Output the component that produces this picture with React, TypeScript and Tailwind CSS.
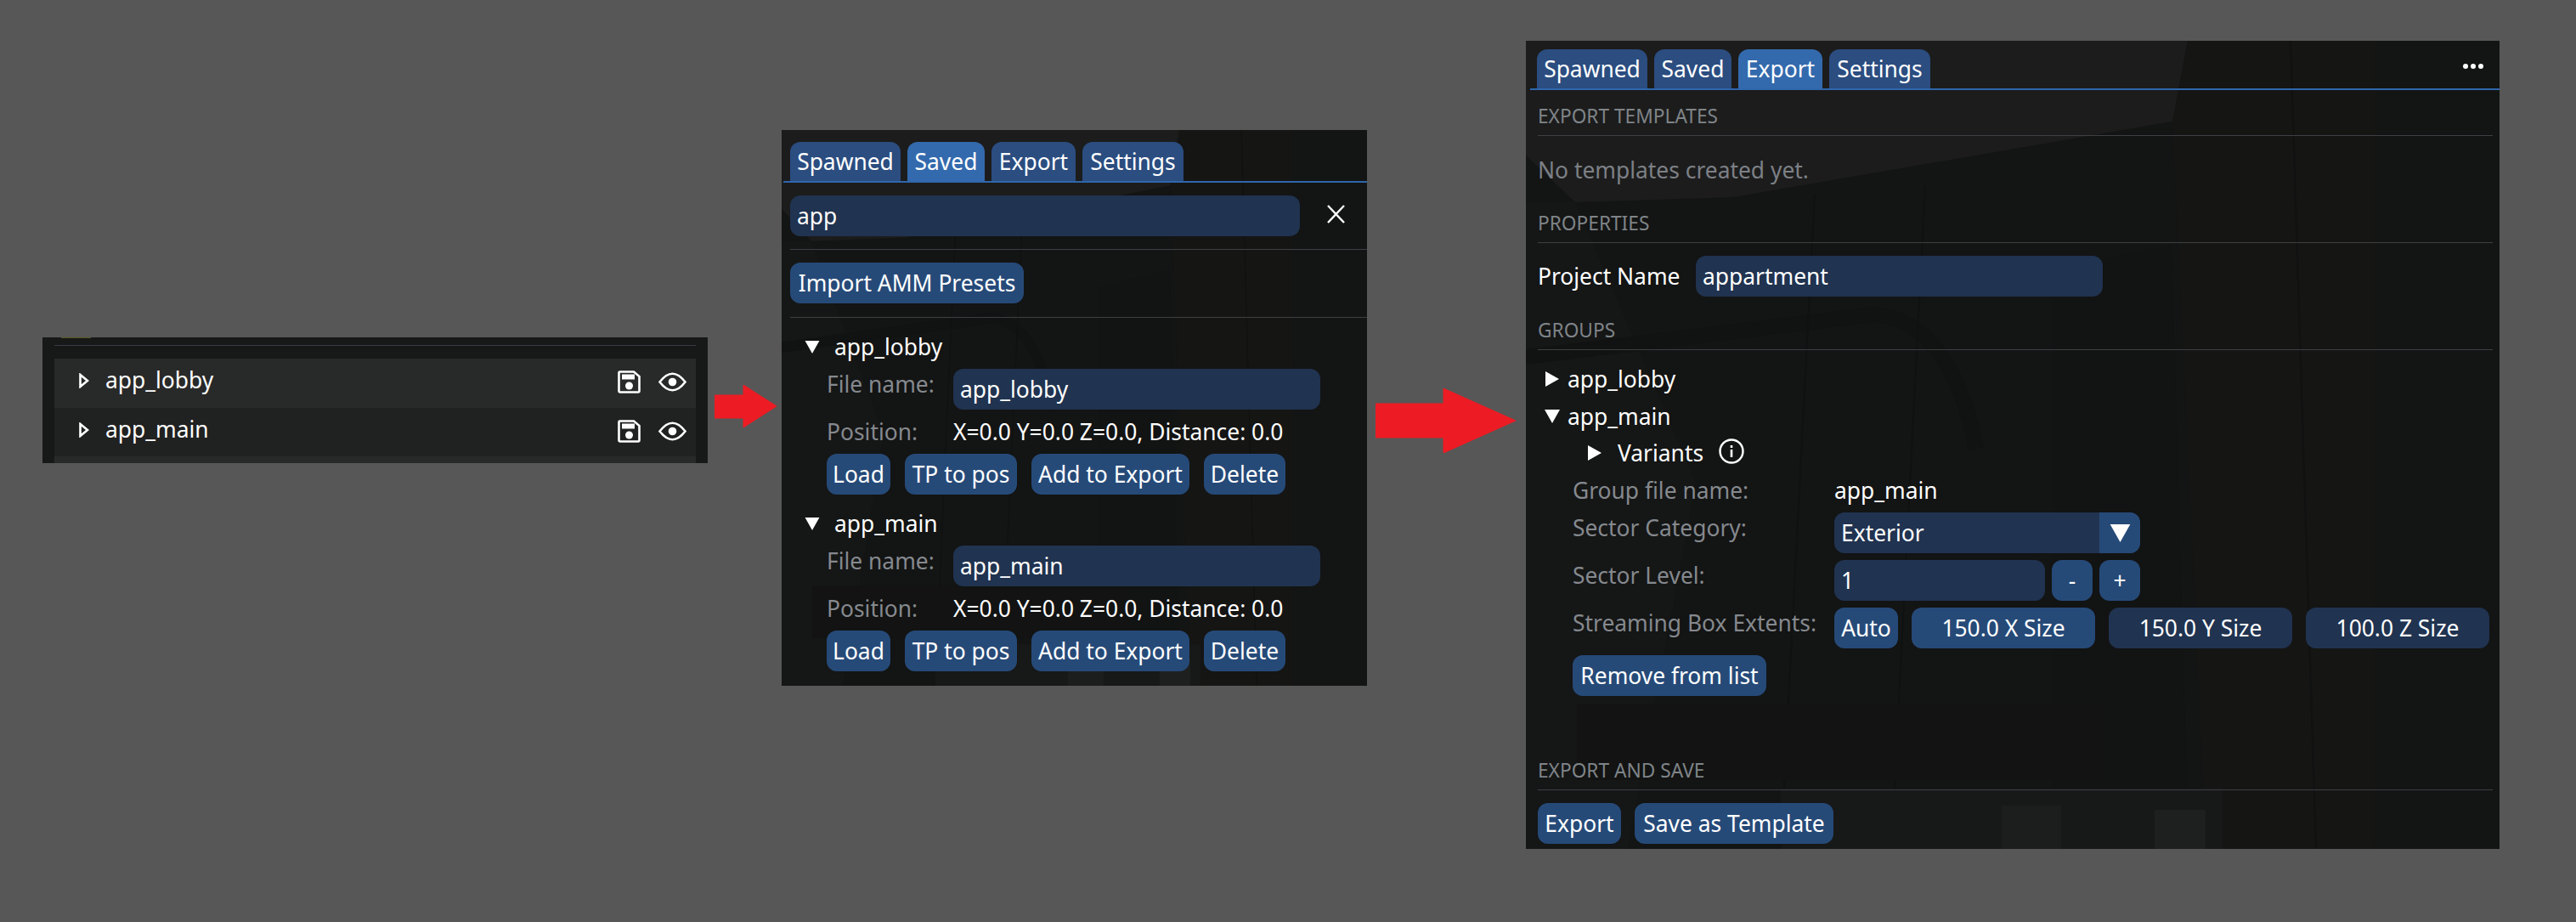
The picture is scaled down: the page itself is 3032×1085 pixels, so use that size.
const BTN = 'flex h-12 items-center justify-center whitespace-nowrap rounded-[12px] bg-[#264a78] text-white'
const INPUT = 'flex h-12 items-center rounded-[12px] bg-[#203350] px-2 text-white'
const MUTED = 'text-[#85898e]'

const TABS = [
  { name: 'Spawned', width: 'w-[130px]' },
  { name: 'Saved', width: 'w-[91px]' },
  { name: 'Export', width: 'w-[99px]' },
  { name: 'Settings', width: 'w-[119px]' },
]

function Backdrop() {
  return (
    <svg className="pointer-events-none absolute inset-0 h-full w-full" viewBox="0 0 1146 951" preserveAspectRatio="none">
      <polygon points="0,0 779,0 761,95 244,184 58,190 0,135" fill="#1c1c1c" />
      <polygon points="761,95 779,0 1000,0 1000,951 800,951 780,500" fill="#151514" />
      <polygon points="0,190 58,190 200,520 120,951 0,951" fill="#151616" />
      <polygon points="620,270 760,240 780,951 620,951" fill="#121313" />
      <path d="M0 372 L410 322 Q500 330 530 480" fill="none" stroke="#111212" strokeWidth="18" />
      <path d="M340 180 L300 951 M470 170 L430 951 M900 0 L930 951" stroke="#101111" strokeWidth="2" fill="none" />
      <rect x="60" y="780" width="620" height="90" fill="#121312" />
      <rect x="300" y="880" width="520" height="71" fill="#171818" />
      <rect x="560" y="900" width="70" height="51" fill="#1c1e1e" />
      <rect x="740" y="905" width="60" height="46" fill="#1e2020" />
    </svg>
  )
}

function TabBar({ active }: { active: string }) {
  return (
    <div className="flex h-[48px] gap-2 border-b-2 border-[#2f66ad] pl-2">
      {TABS.map((t) => (
        <div
          key={t.name}
          className={`flex h-[46px] items-center justify-center rounded-t-[12px] text-white ${t.width} ${t.name === active ? 'bg-[#336aad]' : 'bg-[#2b4d80]'}`}
        >
          {t.name}
        </div>
      ))}
    </div>
  )
}

function Heading({ children, className }: { children: string; className: string }) {
  return (
    <div className={`flex h-[42px] items-center border-b border-[#3e3f44] pb-[3px] text-[22.7px] text-[#7f8488] ${className}`}>
      {children}
    </div>
  )
}

function TriDown({ className }: { className: string }) {
  return (
    <svg className={className} viewBox="0 0 18 16">
      <polygon points="0,0 18,0 9,16" fill="#fff" />
    </svg>
  )
}

function TriRight({ className }: { className: string }) {
  return (
    <svg className={className} viewBox="0 0 16 18">
      <polygon points="0,0 16,9 0,18" fill="#fff" />
    </svg>
  )
}

function ListRow({ name, bg }: { name: string; bg: string }) {
  return (
    <div className={`flex items-center pb-[3px] pl-[29px] pr-[11px] text-white ${bg}`}>
      <svg className="mb-[3px] h-[18px] w-3" viewBox="0 0 12 18">
        <polygon points="1.5,2 10,9 1.5,16" fill="none" stroke="#fff" strokeWidth="2.6" />
      </svg>
      <span className="ml-[19px] flex-1 pb-[5px]">{name}</span>
      <svg className="h-[27px] w-[27px]" viewBox="0 0 27 27">
        <path d="M2.5 1.5 H19 L25.5 7 V24 Q25.5 25.5 24 25.5 H3 Q1.5 25.5 1.5 24 V3 Q1.5 1.5 2.5 1.5 Z" fill="none" stroke="#fff" strokeWidth="2.6" />
        <rect x="5" y="4.5" width="15" height="6" fill="#fff" />
        <circle cx="13.5" cy="18" r="4.5" fill="#fff" />
      </svg>
      <svg className="ml-[21px] h-[23px] w-[33px]" viewBox="0 0 33 23">
        <path d="M1.5 11.5 Q16.5 -8 31.5 11.5 Q16.5 31 1.5 11.5 Z" fill="none" stroke="#fff" strokeWidth="2.6" />
        <circle cx="16.5" cy="11.5" r="4.8" fill="#fff" />
      </svg>
    </div>
  )
}

function SavedEntry({ name, className }: { name: string; className: string }) {
  return (
    <div className={className}>
      <div className="flex h-8 items-center pb-1 pl-[27px] text-white">
        <TriDown className="h-[15px] w-[18px]" />
        <span className="ml-[17px]">{name}</span>
      </div>
      <div className="mt-2 flex pl-[53px]">
        <span className={`w-[149px] pt-[2px] leading-8 ${MUTED}`}>File name:</span>
        <div className={`${INPUT} w-[432px]`}>{name}</div>
      </div>
      <div className="mt-3 flex h-8 items-center pb-1 pl-[53px]">
        <span className={`w-[149px] ${MUTED}`}>Position:</span>
        <span className="text-white">X=0.0 Y=0.0 Z=0.0, Distance: 0.0</span>
      </div>
      <div className="mt-2 flex gap-[17px] pl-[53px]">
        <div className={`${BTN} w-[75px]`}>Load</div>
        <div className={`${BTN} w-[132px]`}>TP to pos</div>
        <div className={`${BTN} w-[186px]`}>Add to Export</div>
        <div className={`${BTN} w-[96px]`}>Delete</div>
      </div>
    </div>
  )
}

function FormRow({ label, children, className }: { label: string; children: React.ReactNode; className: string }) {
  return (
    <div className={`flex pl-[55px] ${className}`}>
      <span className={`w-[308px] shrink-0 pt-[2px] leading-8 ${MUTED}`}>{label}</span>
      {children}
    </div>
  )
}

export default function App() {
  return (
    <div className="flex h-[1085px] w-[3032px] items-start overflow-hidden bg-[#575757] pl-[50px] font-['Noto_Sans',sans-serif] text-[26.4px] leading-8">
      {/* hierarchy list crop */}
      <div className="relative mt-[397px] h-[148px] w-[783px] shrink-0 overflow-hidden bg-[#171818]">
        <div className="absolute left-[22px] top-0 h-px w-[35px] bg-[#5a5a20]" />
        <div className="relative mx-[14px] mt-[9px] border-t border-[#3a3a44]" />
        <div className="relative mx-[14px] mt-[15px] grid grid-rows-[58px_57px_8px]">
          <ListRow name="app_lobby" bg="bg-[#282929]" />
          <ListRow name="app_main" bg="bg-[#202121]" />
          <div className="bg-[#282929]" />
        </div>
      </div>

      <svg className="ml-[8px] mt-[453px] h-[50px] w-[73px] shrink-0" viewBox="0 0 73 50">
        <polygon points="0,12 34,12 34,0 73,25 34,50 34,39 0,39" fill="#ed1c24" stroke="#ed1c24" strokeLinejoin="round" />
      </svg>

      {/* saved tab */}
      <div className="relative ml-[6px] mt-[153px] h-[654px] w-[689px] shrink-0 overflow-hidden bg-[#131414]">
        <Backdrop />
        <div className="relative pt-[14px]">
          <div className="pl-[2px]">
            <TabBar active="Saved" />
          </div>
          <div className="mt-[15px] flex items-center pl-[10px]">
            <div className={`${INPUT} w-[600px]`}>app</div>
            <svg className="mb-[4px] ml-[31px] h-[22px] w-[23px]" viewBox="0 0 23 22">
              <path d="M2 1 L21 21 M21 1 L2 21" stroke="#fff" strokeWidth="2.4" />
            </svg>
          </div>
          <div className="ml-[10px] mt-[15px] border-t border-[#3e3f44]" />
          <div className="mt-[15px] pl-[10px]">
            <div className={`${BTN} w-[275px]`}>Import AMM Presets</div>
          </div>
          <div className="ml-[10px] mt-[16px] border-t border-[#3e3f44]" />
          <SavedEntry name="app_lobby" className="mt-5" />
          <SavedEntry name="app_main" className="mt-5" />
        </div>
      </div>

      <svg className="ml-[10px] mt-[457px] h-[76px] w-[165px] shrink-0" viewBox="0 0 165 76">
        <polygon points="0,18 80,18 80,0 165,38 80,76 80,58 0,58" fill="#ed1c24" stroke="#ed1c24" strokeLinejoin="round" />
      </svg>

      {/* export tab */}
      <div className="relative ml-[12px] mt-[48px] h-[951px] w-[1146px] shrink-0 overflow-hidden bg-[#131414]">
        <Backdrop />
        <div className="relative pt-[10px]">
          <div className="absolute right-[19px] top-[27px] flex gap-[3px]">
            <span className="h-[6px] w-[6px] rounded-full bg-white" />
            <span className="h-[6px] w-[6px] rounded-full bg-white" />
            <span className="h-[6px] w-[6px] rounded-full bg-white" />
          </div>
          <div className="pl-[5px]">
            <TabBar active="Export" />
          </div>
          <div className="pl-[14px] pr-2">
            <Heading className="mt-3">EXPORT TEMPLATES</Heading>
            <p className="mt-[24px] text-[#7c8086]">No templates created yet.</p>
            <Heading className="mt-[28px]">PROPERTIES</Heading>
            <div className="mt-[15px] flex items-center">
              <span className="w-[186px] text-white">Project Name</span>
              <div className={`${INPUT} w-[479px]`}>appartment</div>
            </div>
            <Heading className="mt-[21px]">GROUPS</Heading>
          </div>
          <div className="mt-5 flex h-8 items-center pb-1 pl-[23px] text-white">
            <TriRight className="h-[18px] w-4" />
            <span className="ml-[10px]">app_lobby</span>
          </div>
          <div className="mt-3 flex h-8 items-center pb-1 pl-[22px] text-white">
            <TriDown className="h-[16px] w-[18px]" />
            <span className="ml-[9px]">app_main</span>
          </div>
          <div className="mt-[11px] flex h-8 items-center pb-1 pl-[73px] text-white">
            <TriRight className="h-[18px] w-4" />
            <span className="ml-[19px]">Variants</span>
            <svg className="mb-[5px] ml-[18px] h-[30px] w-[30px]" viewBox="0 0 30 30">
              <circle cx="15" cy="15" r="13.5" fill="none" stroke="#fff" strokeWidth="2.4" />
              <rect x="13.7" y="13" width="2.6" height="9" fill="#fff" />
              <rect x="13.7" y="8" width="2.6" height="3" fill="#fff" />
            </svg>
          </div>
          <div className="mt-3 flex h-8 items-center pb-1 pl-[55px]">
            <span className={`w-[308px] ${MUTED}`}>Group file name:</span>
            <span className="text-white">app_main</span>
          </div>
          <FormRow label="Sector Category:" className="mt-2">
            <div className="flex h-12 w-[360px] overflow-hidden rounded-[12px] bg-[#203350] text-white">
              <span className="flex flex-1 items-center px-2">Exterior</span>
              <div className="flex w-[48px] items-center justify-center bg-[#264a78]">
                <TriDown className="h-[21px] w-[25px]" />
              </div>
            </div>
          </FormRow>
          <FormRow label="Sector Level:" className="mt-2">
            <div className={`${INPUT} w-[248px]`}>1</div>
            <div className={`${BTN} ml-2 w-[48px]`}>-</div>
            <div className={`${BTN} ml-2 w-[48px]`}>+</div>
          </FormRow>
          <FormRow label="Streaming Box Extents:" className="mt-2">
            <div className={`${BTN} w-[75px]`}>Auto</div>
            <div className={`${BTN} ml-4 w-[216px]`}>150.0 X Size</div>
            <div className={`${BTN} ml-4 w-[216px] !bg-[#203350]`}>150.0 Y Size</div>
            <div className={`${BTN} ml-4 w-[216px] !bg-[#203350]`}>100.0 Z Size</div>
          </FormRow>
          <div className="mt-2 pl-[55px]">
            <div className={`${BTN} w-[228px]`}>Remove from list</div>
          </div>
          <div className="pl-[14px] pr-2">
            <Heading className="mt-[69px]">EXPORT AND SAVE</Heading>
            <div className="mt-[15px] flex gap-4">
              <div className={`${BTN} w-[98px]`}>Export</div>
              <div className={`${BTN} w-[234px]`}>Save as Template</div>
            </div>
          </div>
        </div>
      </div>
    </div>
  )
}
